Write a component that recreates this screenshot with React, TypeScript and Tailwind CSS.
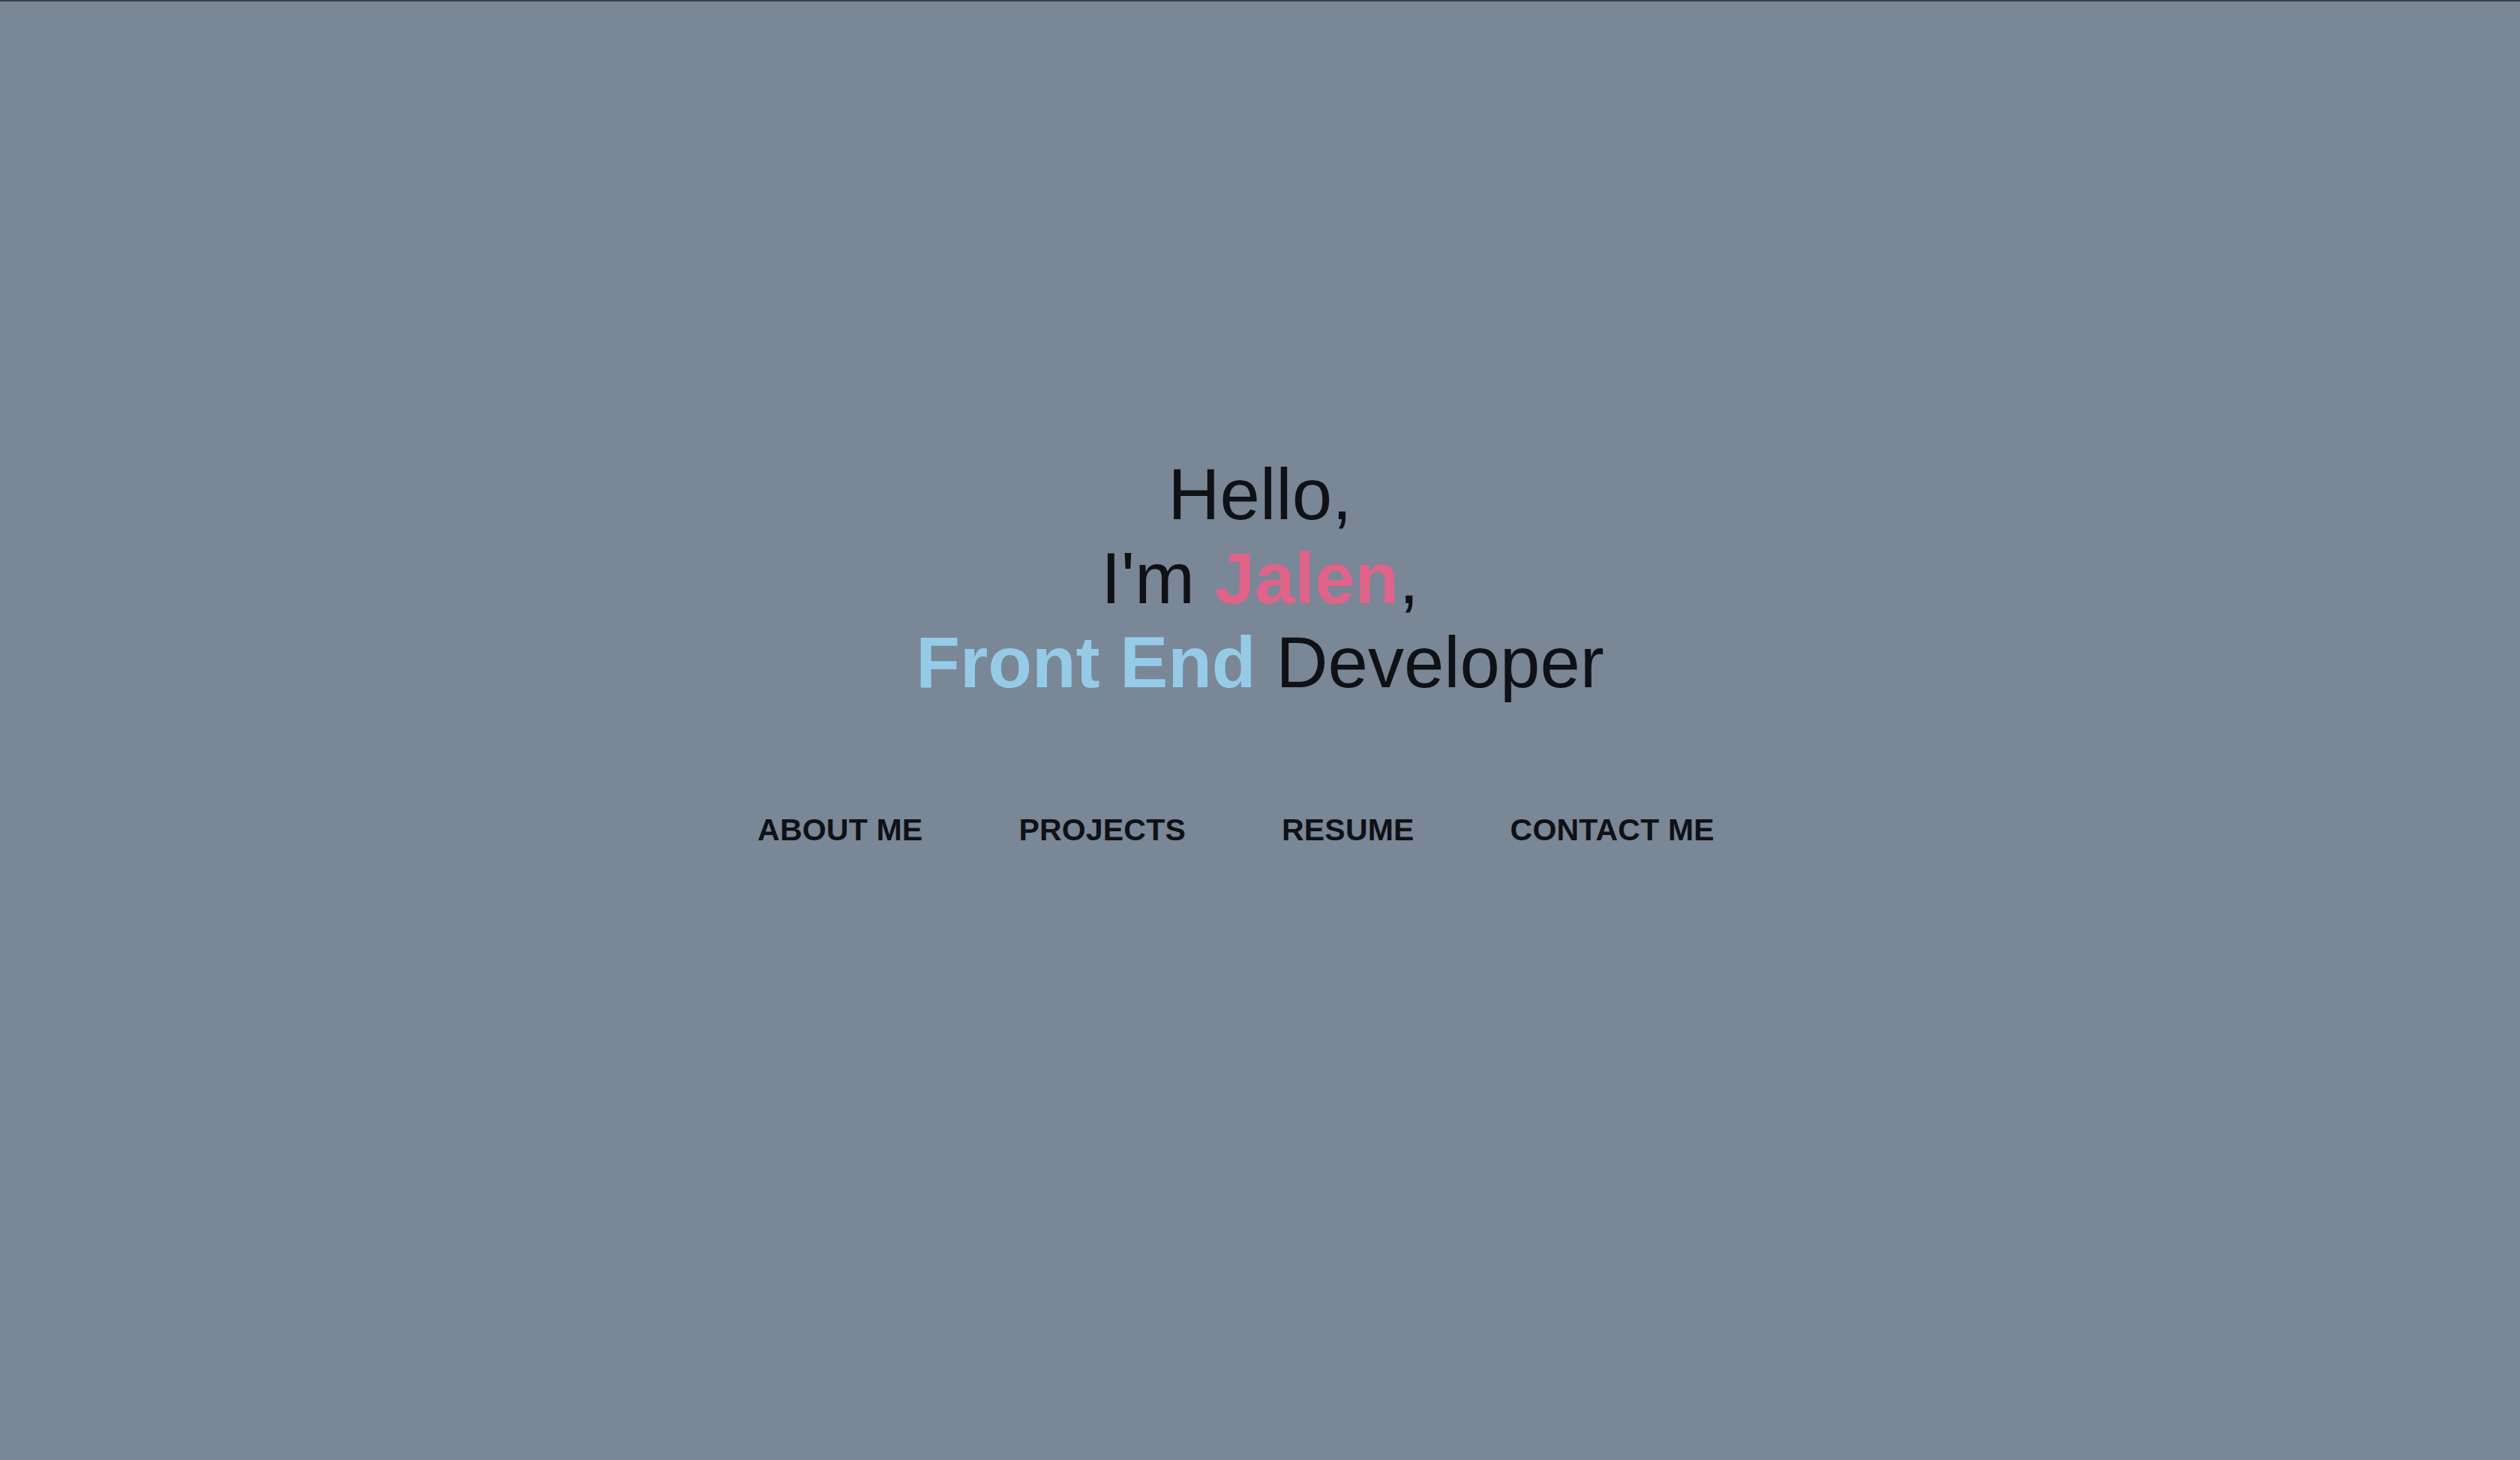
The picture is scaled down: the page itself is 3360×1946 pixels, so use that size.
const navLinks = ["ABOUT ME", "PROJECTS", "RESUME", "CONTACT ME"];

const App: React.FC = () => {
  return (
    <div className="min-h-screen w-full bg-[#798797] border-t-2 border-[#3b3f47] flex flex-col items-center pt-[601px] font-['Liberation_Sans',Arial,sans-serif] text-[#101114]">
      <h1 className="text-center text-[96px] leading-[112px] font-normal">
        Hello,
        <br />
        I'm <span className="font-bold text-[#e0638a]">Jalen</span>,
        <br />
        <span className="font-bold text-[#96cbe8]">Front End</span> Developer
      </h1>

      <nav className="mt-[144px] pr-[64px]">
        <ul className="flex gap-[128px]">
          {navLinks.map((link) => (
            <li key={link}>
              <a
                href="#"
                className="text-[41px] leading-[47px] font-bold tracking-[0.2px] text-[#101114]"
              >
                {link}
              </a>
            </li>
          ))}
        </ul>
      </nav>
    </div>
  );
};

export default App;
